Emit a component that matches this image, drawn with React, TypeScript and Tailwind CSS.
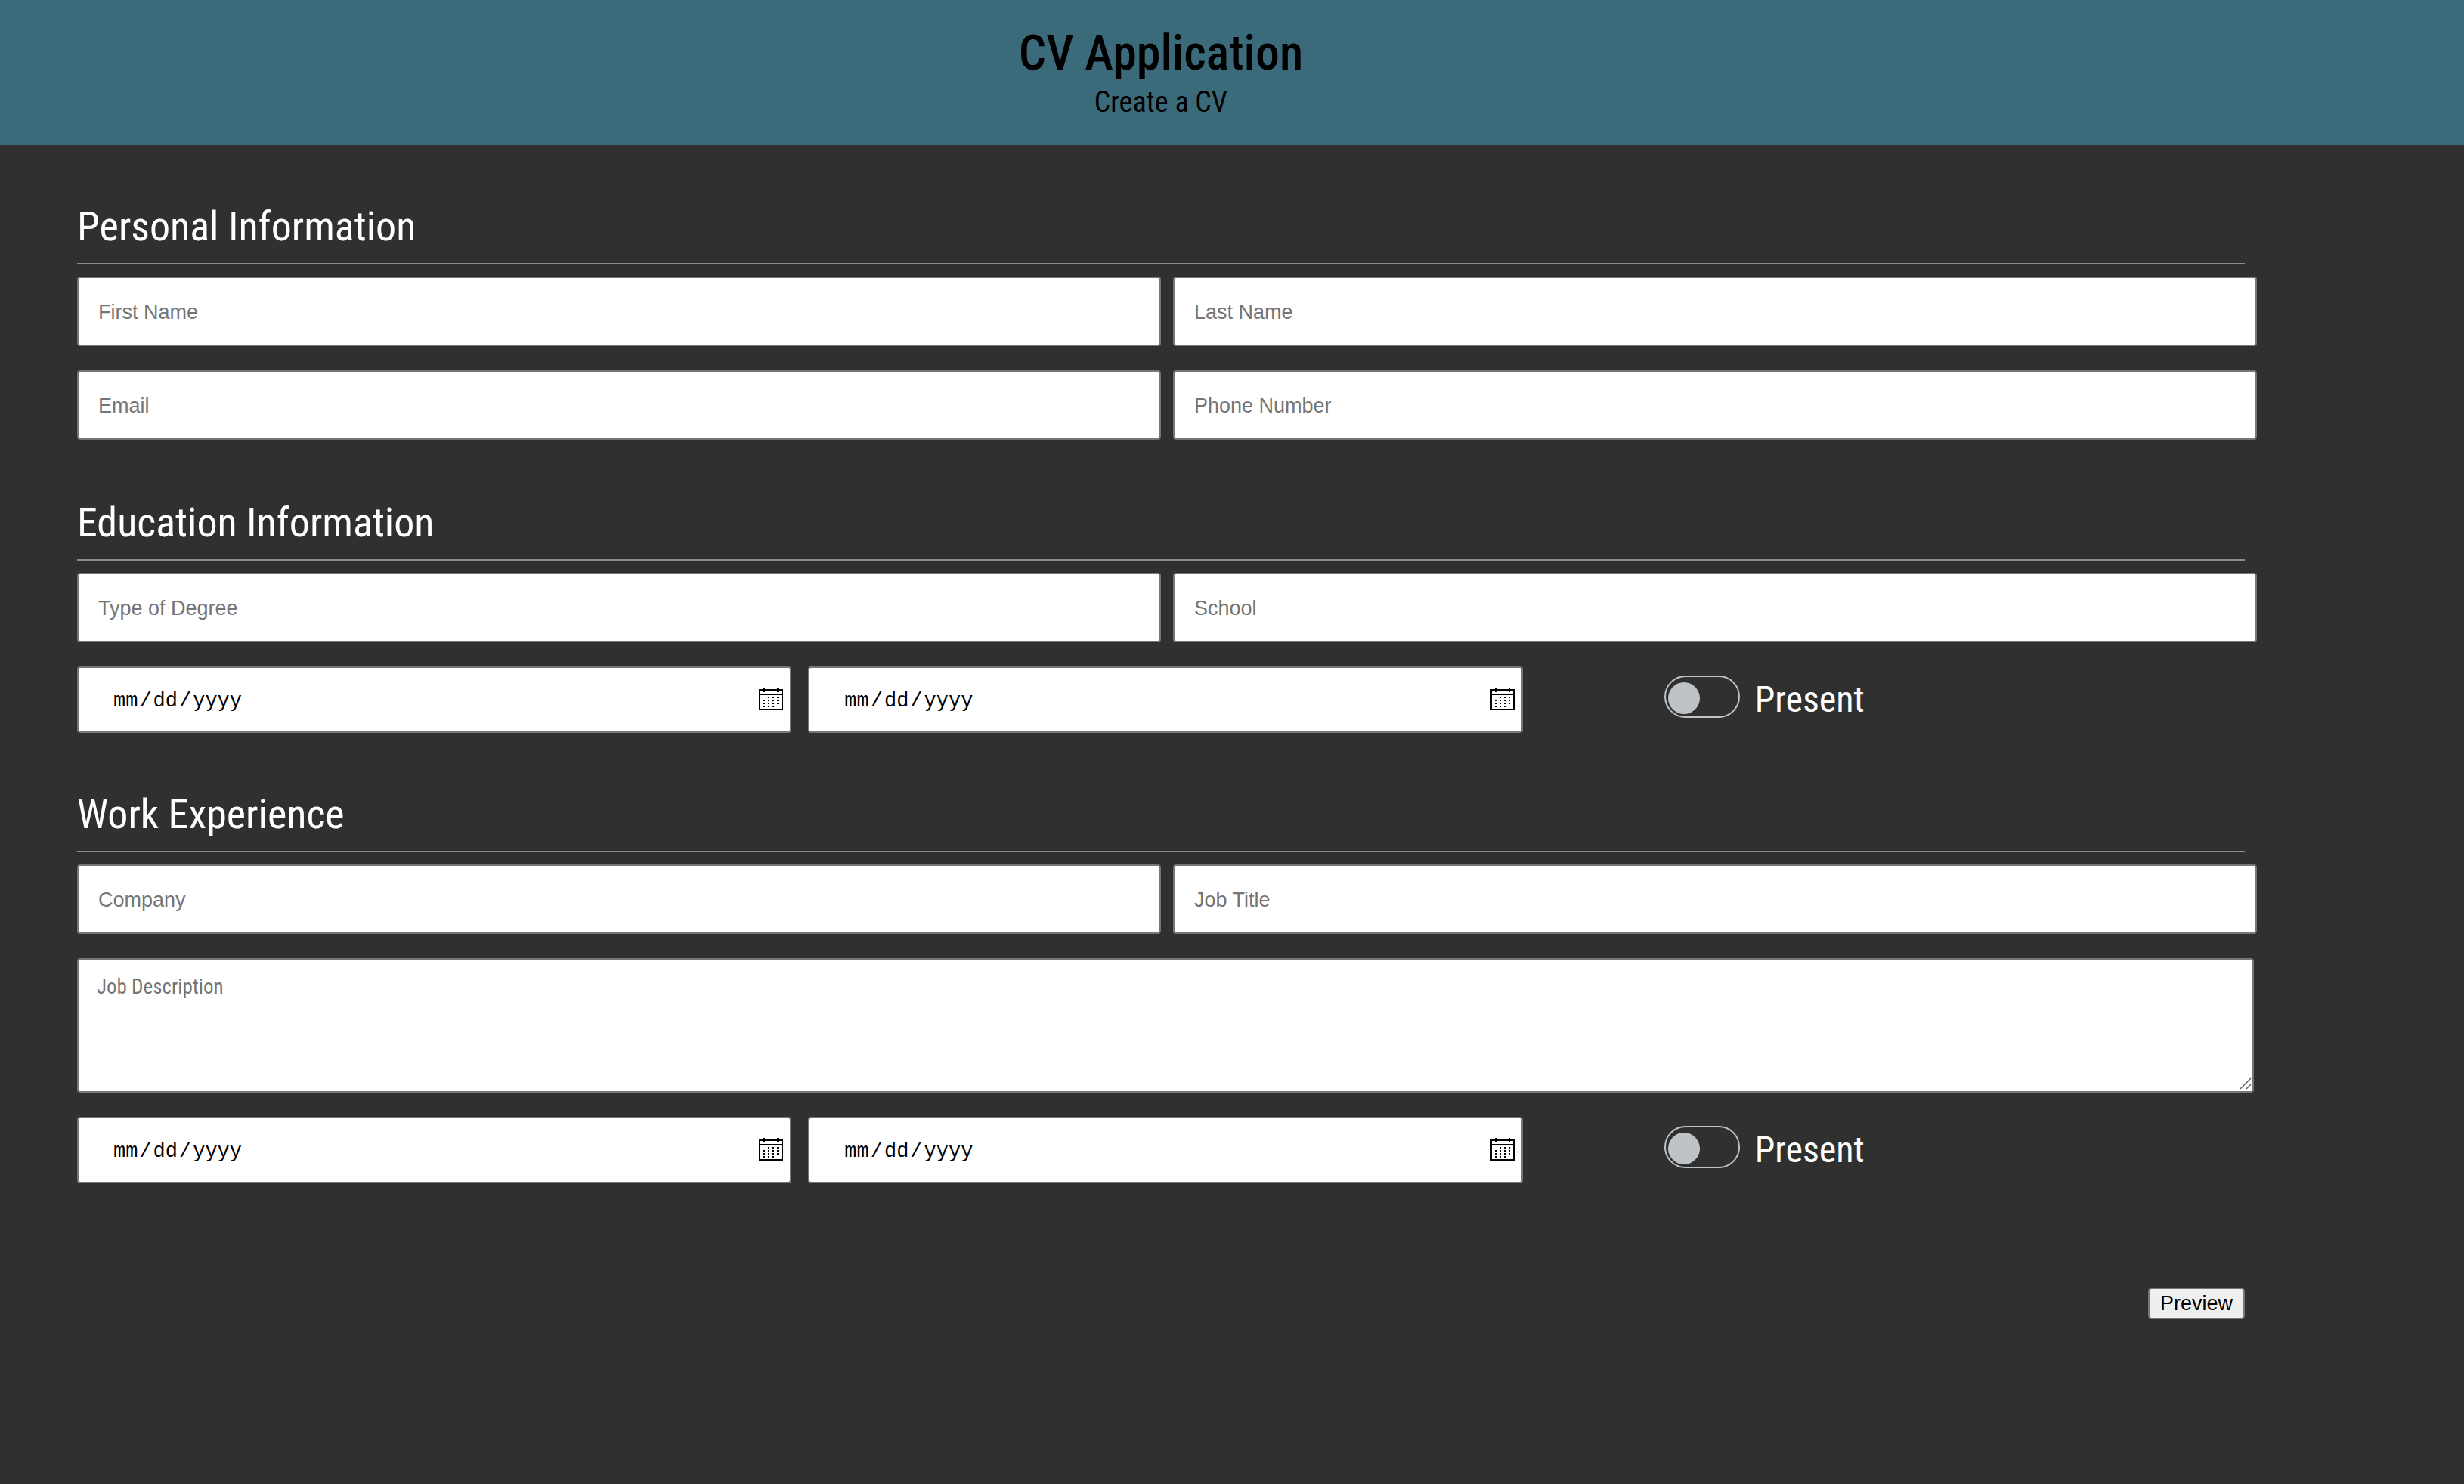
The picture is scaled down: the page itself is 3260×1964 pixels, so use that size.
import React from "react";
import type { ReactNode } from "react";

const CALENDAR_DOTS: [number, number][] = [
  [12, 12], [18, 12], [24, 12],
  [6, 16], [12, 16], [18, 16], [24, 16],
  [6, 20], [12, 20], [18, 20], [24, 20],
  [6, 24], [12, 24], [18, 24],
];

function CalendarIcon() {
  return (
    <svg
      aria-hidden="true"
      viewBox="0 0 32 30"
      shapeRendering="crispEdges"
      className="pointer-events-none absolute right-[11px] top-7 h-[30px] w-8 text-black"
    >
      <rect x="1" y="3" width="30" height="26" fill="none" stroke="currentColor" strokeWidth="2" />
      <path d="M0 8h32v2H0zM6 0h2v6H6zM24 0h2v6h-2z" fill="currentColor" />
      {CALENDAR_DOTS.map(([x, y]) => (
        <rect key={`${x}-${y}`} x={x} y={y} width="2" height="2" fill="currentColor" />
      ))}
    </svg>
  );
}

function Section({ title, className = "", children }: { title: string; className?: string; children: ReactNode }) {
  return (
    <section className={className}>
      <h2 className="border-b-2 border-[#8a8a8a] pb-4 text-[54px] leading-[64px] text-white">{title}</h2>
      <div className="-mr-4 mt-4 flex flex-col gap-8">{children}</div>
    </section>
  );
}

function TextField({ label, type = "text" }: { label: string; type?: string }) {
  return (
    <input
      type={type}
      aria-label={label}
      placeholder={label}
      className="h-[92px] w-full rounded-sm border-2 border-[#767676] bg-white px-[26px] pt-0.5 font-['Liberation_Sans',sans-serif] text-[27px] text-black placeholder:text-[#757575]"
    />
  );
}

function FieldPair({ children }: { children: ReactNode }) {
  return <div className="grid grid-cols-2 gap-4">{children}</div>;
}

function DateField({ label }: { label: string }) {
  return (
    <div className="relative">
      <input
        type="date"
        aria-label={label}
        className="block h-[88px] w-full rounded-sm border-2 border-[#767676] bg-white pl-11 pr-2 pt-1 font-['Liberation_Mono',monospace] text-[27px] text-black [&::-webkit-calendar-picker-indicator]:opacity-0 [&::-webkit-datetime-edit-day-field]:px-0.5 [&::-webkit-datetime-edit-month-field]:px-0.5 [&::-webkit-datetime-edit-year-field]:px-0.5"
      />
      <CalendarIcon />
    </div>
  );
}

function DateRow({ id }: { id: string }) {
  return (
    <div className="mr-1 grid grid-cols-3 gap-[22px]">
      <DateField label="Start date" />
      <DateField label="End date" />
      <div className="flex items-center gap-5 pl-[165px]">
        <input
          id={id}
          type="checkbox"
          role="switch"
          className="mb-2 h-14 w-[100px] cursor-pointer appearance-none rounded-full border-2 border-[#bdc3c7] pl-[3px] pt-[7px] before:block before:size-[42px] before:rounded-full before:bg-[#bdc3c7] before:content-[''] checked:pl-[51px]"
        />
        <label htmlFor={id} className="text-5xl text-white">
          Present
        </label>
      </div>
    </div>
  );
}

function DescriptionField() {
  return (
    <div className="relative mr-1">
      <textarea
        aria-label="Job Description"
        placeholder="Job Description"
        className="block h-[178px] w-full resize-none rounded-sm border-2 border-[#767676] bg-white px-6 py-5 text-[27px] leading-8 text-black placeholder:text-[#757575]"
      />
      <svg
        aria-hidden="true"
        viewBox="0 0 16 16"
        className="pointer-events-none absolute bottom-1 right-[3px] size-4 text-[#606060]"
      >
        <path d="M1 15 15 1M9 15 15 9" stroke="currentColor" strokeWidth="1.5" />
      </svg>
    </div>
  );
}

export default function App() {
  return (
    <div className="min-h-screen bg-[#303030] font-['Roboto_Condensed',Roboto,sans-serif]">
      <header className="bg-[#3b6a7b] py-8 pl-[102px] pr-[290px] text-center text-black">
        <h1 className="text-[64px] font-medium leading-[78px]">CV Application</h1>
        <p className="text-[38px] leading-[50px]">Create a CV</p>
      </header>

      <main className="pl-[102px] pr-[290px] pt-[76px]">
        <form onSubmit={(event) => event.preventDefault()}>
          <div className="flex flex-col gap-[76px]">
            <Section title="Personal Information" className="pb-0.5">
              <FieldPair>
                <TextField label="First Name" />
                <TextField label="Last Name" />
              </FieldPair>
              <FieldPair>
                <TextField label="Email" type="email" />
                <TextField label="Phone Number" type="tel" />
              </FieldPair>
            </Section>

            <Section title="Education Information">
              <FieldPair>
                <TextField label="Type of Degree" />
                <TextField label="School" />
              </FieldPair>
              <DateRow id="education-present" />
            </Section>

            <Section title="Work Experience">
              <FieldPair>
                <TextField label="Company" />
                <TextField label="Job Title" />
              </FieldPair>
              <DescriptionField />
              <DateRow id="work-present" />
            </Section>
          </div>

          <div className="mt-[138px] flex justify-end">
            <button
              type="submit"
              className="h-[42px] w-32 rounded-[5px] border-2 border-[#767676] bg-[#efefef] font-['Liberation_Sans',sans-serif] text-[27px] leading-8 text-black"
            >
              Preview
            </button>
          </div>
        </form>
      </main>
    </div>
  );
}
